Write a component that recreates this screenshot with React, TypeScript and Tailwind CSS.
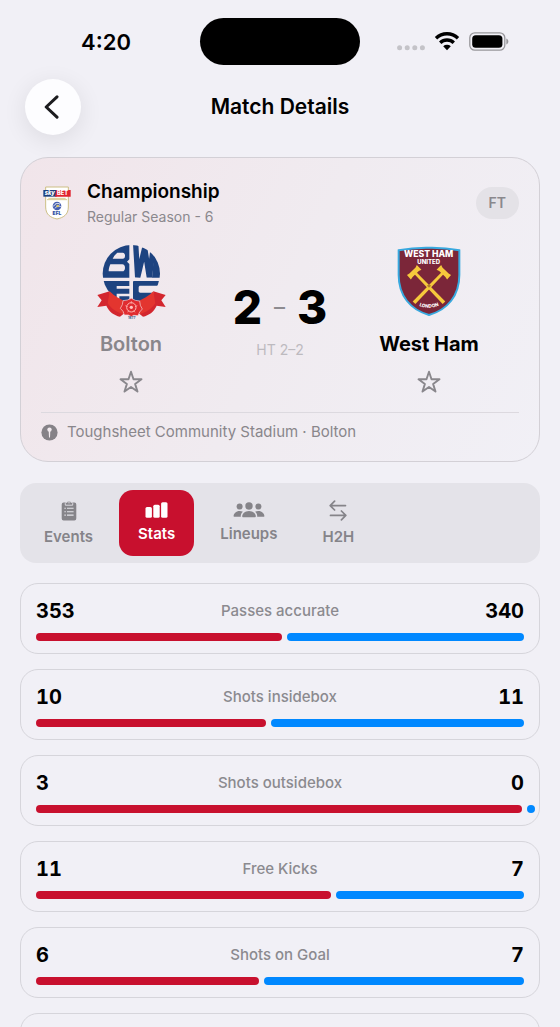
import type { ReactNode } from "react";

type Stat = { label: string; home: number; away: number };

const stats: Stat[] = [
  { label: "Passes accurate", home: 353, away: 340 },
  { label: "Shots insidebox", home: 10, away: 11 },
  { label: "Shots outsidebox", home: 3, away: 0 },
  { label: "Free Kicks", home: 11, away: 7 },
  { label: "Shots on Goal", home: 6, away: 7 },
];

function StatusBar() {
  return (
    <div className="grid grid-cols-[1fr_160px_1fr] items-center pt-[18px]">
      <div className="pl-3 text-center text-[22px] leading-7 font-semibold">4:20</div>
      <div className="h-[47px] rounded-full bg-black" />
      <div className="flex items-center justify-center gap-[9px] pr-[14px]">
        <svg width="28" height="20" viewBox="0 0 28 20" fill="#c4c3c8" aria-hidden="true">
          <circle cx="2.600" cy="15.800" r="2.500" />
          <circle cx="10.200" cy="15.800" r="2.500" />
          <circle cx="17.800" cy="15.800" r="2.500" />
          <circle cx="25.400" cy="15.800" r="2.500" />
        </svg>
        <svg width="26" height="20" viewBox="0 0 26 20" aria-hidden="true">
          <g fill="none" stroke="#000" strokeWidth="3.400">
            <path d="M2 6.200a15.800 15.800 0 0 1 22 0" />
            <path d="M6.200 10.800a9.800 9.800 0 0 1 13.600 0" />
          </g>
          <path d="M9.200 14.200a5.600 5.600 0 0 1 7.600 0L13 18.200z" fill="#000" />
        </svg>
        <svg width="40" height="20" viewBox="0 0 40 20" aria-hidden="true">
          <rect x="0.800" y="0.800" width="35" height="17.400" rx="5" fill="none" stroke="#98979b" strokeWidth="1.300" />
          <rect x="3.200" y="3.300" width="30.200" height="12.400" rx="3.500" fill="#000" />
          <path d="M37.300 6.500v6c1.300-.5 2-1.600 2-3s-.7-2.500-2-3z" fill="#98979b" />
        </svg>
      </div>
    </div>
  );
}

function LeagueBadge() {
  return (
    <svg width="32" height="38" viewBox="0 0 96 114" aria-hidden="true">
      <path d="M14 9h68v60c0 24-16 32-34 36C30 101 14 93 14 69z" fill="#fff" stroke="#cdbf84" strokeWidth="3" />
      <path d="M7 18h40v20H7z" fill="#1c3f7c" />
      <path d="M46 18h43v20H42z" fill="#e0242f" />
      <text x="11" y="34" fontSize="17" fontWeight="800" fontStyle="italic" fill="#fff" fontFamily="Inter, sans-serif">sky</text>
      <text x="48" y="34" fontSize="17" fontWeight="800" fill="#fff" fontFamily="Inter, sans-serif">BET</text>
      <path d="M18 47h60M22 43h52" stroke="#d8ca90" strokeWidth="3" />
      <circle cx="48" cy="66" r="13" fill="#455fb0" />
      <path d="M38 67c4-9 13-11 19-6M42 73c6-8 11-8 17-5" stroke="#fff" strokeWidth="3" fill="none" />
      <circle cx="50" cy="66" r="4" fill="#d7c367" />
      <text x="48" y="93" fontSize="15" fontWeight="900" textAnchor="middle" fill="#3353a5" fontFamily="Inter, sans-serif">EFL</text>
    </svg>
  );
}

function BoltonCrest() {
  return (
    <svg width="78" height="78" viewBox="18 12 234 234" role="img" aria-label="Bolton crest">
      <defs>
        <clipPath id="bolton-disc">
          <circle cx="136" cy="107" r="86" />
        </clipPath>
        <clipPath id="bolton-top">
          <rect x="45" y="15" width="185" height="104" />
        </clipPath>
      </defs>
      <g clipPath="url(#bolton-disc)">
        <path
          d="M45 15h85v49l-7 7 7 7v41H45zM94 44c-5 4-10 10-14 18h30c5 0 7-4 7-9s-2-9-7-9zM73 79c-3 7-5 14-5 21h41c5 0 8-5 8-11s-3-10-8-10z"
          fill="#1d4380"
          fillRule="evenodd"
        />
        <g clipPath="url(#bolton-top)">
          <path d="M148 0L155 118L176 30L190 118L203 20" fill="none" stroke="#1d4380" strokeWidth="16" />
          <path d="M207 20h30v100h-39z" fill="#1d4380" />
        </g>
        <g fill="#1d4380">
          <path d="M45 129h85v15H92v8h38v15H92v29H62z" />
          <path d="M145 129h85v14h-67c-3 0-5 2-5 5v11c0 3 2 5 5 5h67v32h-89v-63c0-3 1-4 4-4z" />
          <path d="M100 175h30v23h-30z" />
        </g>
      </g>
      <path d="M34 171l37-11 4 35 40 31-13 10c-18-4-32-14-41-33l-27 4 13-20z" fill="#d3262e" />
      <path d="M239 171l-37-11-4 35-40 31 13 10c18-4 32-14 41-33l27 4-13-20z" fill="#d3262e" />
      <path d="M71 160c15 15 32 25 50 31l-10 37c-20-5-34-15-46-32z" fill="#e3352f" />
      <path d="M202 160c-15 15-32 25-50 31l10 37c20-5 34-15 46-32z" fill="#e3352f" />
      <path d="M136 181l12 6 13 2 2 13 6 11-8 9-5 11-13-1-7 4-9-5-12 0-4-11-8-9 6-11 2-12 13-2z" fill="#e02c30" stroke="#f3d9dc" strokeWidth="2" />
      <circle cx="136" cy="208" r="14" fill="none" stroke="#ffb5b0" strokeWidth="3" />
      <circle cx="136" cy="208" r="5" fill="#ffc4c0" />
      <path d="M136 189v8M118 203l7 3M154 203l-7 3M125 223l4-6M147 223l-4-6" stroke="#ffb5b0" strokeWidth="2" />
      <text x="137" y="244" fontSize="10" fontWeight="700" textAnchor="middle" fill="#355687" fontFamily="Inter, sans-serif">1877</text>
    </svg>
  );
}

function Hammer() {
  return (
    <>
      <path d="M-4 4h8l1.500 124h-11z" />
      <path d="M-22-9l8 2h26l8-3v20l-8-3h-26l-9 2z" />
    </>
  );
}

function WestHamCrest() {
  return (
    <svg width="78" height="78" viewBox="17 13 234 234" role="img" aria-label="West Ham crest">
      <defs>
        <path id="london-arc" d="M92 199Q134 222 176 198" />
      </defs>
      <path d="M43 38Q88 29 134 30Q180 29 225 38V112C225 174 190 216 134 232C78 216 43 174 43 112Z" fill="#7b2639" stroke="#38a9df" strokeWidth="6" />
      <g fill="#f6c93c">
        <g transform="translate(178 103) scale(-1 1) rotate(-44)">
          <Hammer />
        </g>
        <g transform="translate(90 103) rotate(-44)">
          <Hammer />
        </g>
      </g>
      <path d="M128 144l6-6 6 6-6 6z" fill="#b0782e" />
      <g fontFamily="Inter, sans-serif" fontWeight="800" fill="#fff" textAnchor="middle">
        <text x="133" y="58" fontSize="26">WEST HAM</text>
        <text x="133" y="79" fontSize="18">UNITED</text>
        <text fontSize="14">
          <textPath href="#london-arc" startOffset="50%">LONDON</textPath>
        </text>
      </g>
    </svg>
  );
}

function Star() {
  return (
    <svg width="24" height="24" viewBox="0 0 24 24" fill="none" stroke="#89878c" strokeWidth="1.900" strokeLinejoin="round" aria-hidden="true">
      <path d="M12 1.700l2.500 7.500h8l-6.400 4.700 2.400 7.700L12 16.900l-6.500 4.700 2.400-7.700L1.500 9.200h8z" />
    </svg>
  );
}

function Team({ name, crest, muted }: { name: string; crest: ReactNode; muted?: boolean }) {
  return (
    <div className="flex flex-col items-center">
      {crest}
      <h2 className={muted ? "mt-[10px] text-xl leading-7 font-semibold text-[#89868b]" : "mt-[10px] text-xl leading-7 font-bold"}>{name}</h2>
      <button type="button" aria-label={"Follow " + name} className="mt-3">
        <Star />
      </button>
    </div>
  );
}

function MatchCard() {
  return (
    <section className="mt-[22px] rounded-[28px] border border-[#d3d0d6] bg-linear-115 from-[#f1e5ea] via-[#f0ebf0] via-50% to-[#f1f0f6] px-5 pt-5 pb-[18px]">
      <div className="flex items-center justify-between">
        <div className="flex items-center gap-[14px]">
          <LeagueBadge />
          <div>
            <h2 className="text-[19px] leading-7 font-semibold">Championship</h2>
            <p className="text-sm leading-[22px] text-[#8b888d]">Regular Season - 6</p>
          </div>
        </div>
        <span className="rounded-full bg-[#e4e2e7] px-[13px] py-[6px] text-sm leading-5 font-semibold text-[#8a888d]">FT</span>
      </div>
      <div className="mt-[14px] grid grid-cols-[1fr_118px_1fr]">
        <Team name="Bolton" crest={<BoltonCrest />} muted />
        <div className="flex flex-col items-center pt-[39px]">
          <div className="flex items-center gap-3 text-[46px] leading-[52px] font-extrabold">
            <span>2</span>
            <span className="text-[22px] font-medium text-[#8d8b90]">–</span>
            <span>3</span>
          </div>
          <p className="mt-[7px] text-sm leading-5 text-[#bdbabf]">HT 2–2</p>
        </div>
        <Team name="West Ham" crest={<WestHamCrest />} />
      </div>
      <div className="mt-[18px] flex items-center gap-[9px] border-t border-[#dcd9df] pt-2 text-[15px] leading-[22px] text-[#89868b]">
        <svg width="17" height="17" viewBox="0 0 17 17" aria-hidden="true">
          <circle cx="8.500" cy="8.500" r="8.100" fill="#858287" />
          <circle cx="8.500" cy="5.600" r="2.200" fill="#f1eaee" />
          <path d="M7.700 7h1.600l-.3 6.600h-1z" fill="#f1eaee" />
        </svg>
        Toughsheet Community Stadium · Bolton
      </div>
    </section>
  );
}

function EventsIcon() {
  return (
    <svg width="16" height="21" viewBox="0 0 16 21" aria-hidden="true">
      <path d="M2.600 2.500h10.800A1.900 1.900 0 0 1 15.300 4.400v14.200a1.900 1.900 0 0 1-1.900 1.900H2.600a1.900 1.900 0 0 1-1.900-1.900V4.400A1.900 1.900 0 0 1 2.600 2.500z" fill="#858489" />
      <path d="M4.300 5.200V3.400c0-.7.500-1 1.200-1h.6a2 2 0 0 1 3.800 0h.6c.7 0 1.200.3 1.200 1v1.800z" fill="#858489" stroke="#e4e3e9" strokeWidth=".9" />
      <circle cx="8" cy="2.700" r=".7" fill="#e4e3e9" />
      <path d="M3.400 8.300h1.400M6 8.300h6.600M3.400 11.700h1.400M6 11.700h6.600M3.400 15.100h1.400M6 15.100h6.600" stroke="#e4e3e9" strokeWidth="1.100" />
    </svg>
  );
}

function StatsIcon() {
  return (
    <svg width="23" height="16" viewBox="0 0 23 16" fill="#fff" aria-hidden="true">
      <rect x="0.500" y="5" width="6.400" height="10.800" rx="1.500" />
      <rect x="8.300" y="2.700" width="6.400" height="13.100" rx="1.500" />
      <rect x="16.100" y="0.300" width="6.400" height="15.500" rx="1.500" />
    </svg>
  );
}

function LineupsIcon() {
  return (
    <svg width="32" height="16" viewBox="0 0 32 16" fill="#858489" aria-hidden="true">
      <circle cx="6.600" cy="4.600" r="3" />
      <circle cx="25.400" cy="4.600" r="3" />
      <circle cx="16" cy="4" r="3.700" />
      <path d="M10.400 15.300c-.8 0-1.200-.4-1.200-1.100 0-2.200 2.600-5.200 6.800-5.200s6.800 3 6.800 5.200c0 .7-.4 1.100-1.200 1.100z" />
      <path d="M1.600 14.800c-.7 0-1-.3-1-.9 0-2.200 2.400-5 6-5 1.300 0 2.400.3 3.300.8-1.600 1.300-2.300 2.900-2.100 5.100z" />
      <path d="M30.400 14.800c.7 0 1-.3 1-.9 0-2.200-2.400-5-6-5-1.300 0-2.400.3-3.300.8 1.600 1.300 2.300 2.900 2.100 5.100z" />
    </svg>
  );
}

function HeadToHeadIcon() {
  return (
    <svg width="18" height="21" viewBox="0 0 18 21" fill="none" stroke="#858489" strokeWidth="1.700" strokeLinecap="round" strokeLinejoin="round" aria-hidden="true">
      <path d="M5.600 1.200L1.200 5.600l4.400 4.400M1.500 5.600h15" />
      <path d="M12.400 11l4.400 4.400-4.400 4.400M16.500 15.400h-15" />
    </svg>
  );
}

const tabs: { label: string; icon: ReactNode; active?: boolean }[] = [
  { label: "Events", icon: <EventsIcon /> },
  { label: "Stats", icon: <StatsIcon />, active: true },
  { label: "Lineups", icon: <LineupsIcon /> },
  { label: "H2H", icon: <HeadToHeadIcon /> },
];

function Tabs() {
  return (
    <nav className="mt-[21px] flex gap-[7px] rounded-2xl bg-[#e4e3e9] px-[5px] py-[7px]">
      {tabs.map((tab) => (
        <button
          key={tab.label}
          type="button"
          aria-pressed={!!tab.active}
          className={
            "flex min-h-[66px] flex-col items-center justify-center gap-[6px] rounded-[14px] px-[19px] text-[15px] leading-5 font-semibold " +
            (tab.active ? "bg-[#c8102e] text-white" : "text-[#858489]")
          }
        >
          {tab.icon}
          {tab.label}
        </button>
      ))}
    </nav>
  );
}

function StatCard({ label, home, away }: Stat) {
  const share = home / (home + away);
  const homeWidth = away === 0 ? "calc(100% - 2px)" : `calc((100% - 5px) * ${share})`;
  return (
    <li className="rounded-[18px] border border-[#d6d5db] px-[15px] pt-[13px] pb-3">
      <div className="grid grid-cols-[1fr_auto_1fr] items-center">
        <span className="text-xl font-bold tabular-nums">{home}</span>
        <span className="text-[15px] leading-5 font-medium text-[#8b8a8f]">{label}</span>
        <span className="text-right text-xl font-bold tabular-nums">{away}</span>
      </div>
      <div className="mt-2 flex gap-[5px]">
        <div className="h-2 shrink-0 rounded-full bg-[#c8102e]" style={{ width: homeWidth }} />
        <div className="h-2 min-w-2 flex-1 rounded-full bg-[#0088ff]" />
      </div>
    </li>
  );
}

export default function App() {
  return (
    <div className="h-screen overflow-hidden bg-[#f1f0f6] font-['Inter',sans-serif] text-black">
      <StatusBar />
      <div className="px-5">
        <header className="mt-[14px] grid grid-cols-[1fr_auto_1fr] items-center px-[5px]">
          <button
            type="button"
            aria-label="Back"
            className="flex size-14 items-center justify-center rounded-full bg-[#fdfdff] shadow-[0_5px_24px_rgba(0,0,0,0.09)]"
          >
            <svg width="16" height="26" viewBox="0 0 16 26" fill="none" stroke="#1c1c1f" strokeWidth="3" strokeLinecap="round" strokeLinejoin="round" className="mr-1" aria-hidden="true">
              <path d="M14 2.800L3.200 13 14 23.200" />
            </svg>
          </button>
          <h1 className="text-[21px] leading-7 font-semibold">Match Details</h1>
        </header>
        <MatchCard />
        <Tabs />
        <ul className="mt-5 flex flex-col gap-[15px]">
          {stats.map((stat) => (
            <StatCard key={stat.label} {...stat} />
          ))}
          <li className="min-h-[71px] rounded-[18px] border border-[#d6d5db]" />
        </ul>
      </div>
    </div>
  );
}
